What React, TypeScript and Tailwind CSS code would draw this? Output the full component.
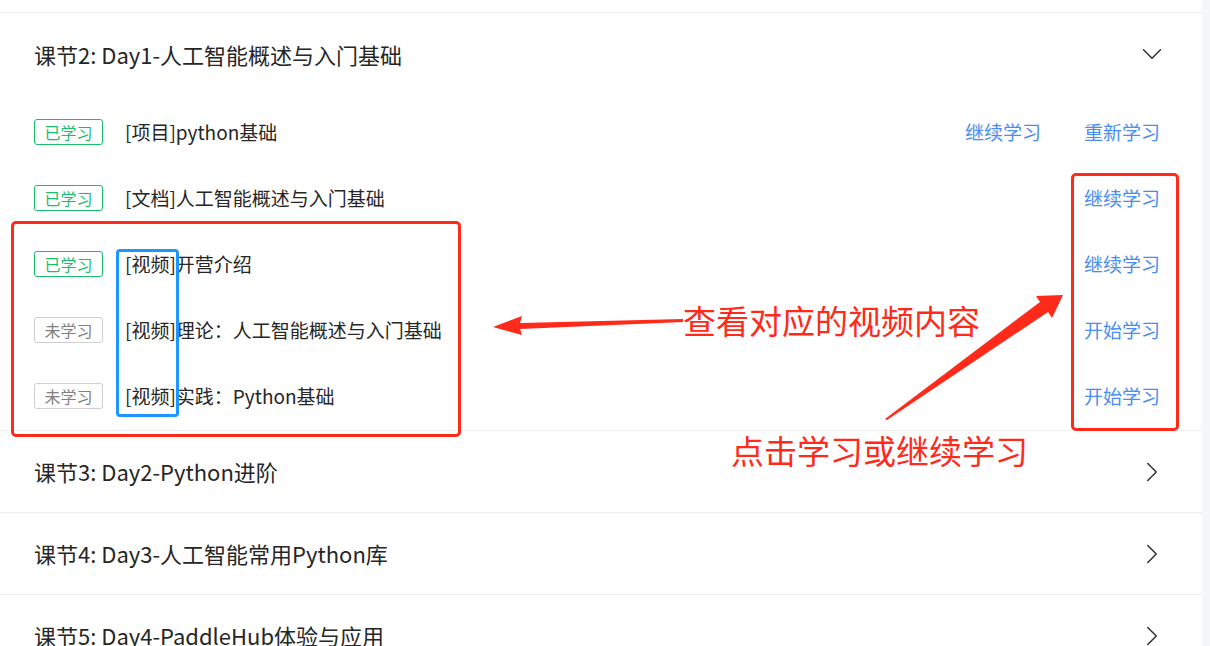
import React from 'react';
import { ChevronDown, ChevronRight } from 'lucide-react';

const font = { fontFamily: '"Noto Sans CJK SC", "Noto Sans", sans-serif' };

type Lesson = {
  done: boolean;
  title: string;
  actions: string[];
};

const lessons: Lesson[] = [
  { done: true, title: '[项目]python基础', actions: ['继续学习', '重新学习'] },
  { done: true, title: '[文档]人工智能概述与入门基础', actions: ['继续学习'] },
  { done: true, title: '[视频]开营介绍', actions: ['继续学习'] },
  { done: false, title: '[视频]理论：人工智能概述与入门基础', actions: ['开始学习'] },
  { done: false, title: '[视频]实践：Python基础', actions: ['开始学习'] },
];

const collapsed = [
  '课节3: Day2-Python进阶',
  '课节4: Day3-人工智能常用Python库',
  '课节5: Day4-PaddleHub体验与应用',
];

const Badge = ({ done }: { done: boolean }) =>
  done ? (
    <span className="w-[69px] h-[26px] shrink-0 flex items-center justify-center rounded-[3px] border border-[#19be6b] text-[16px] text-[#19be6b]">
      已学习
    </span>
  ) : (
    <span className="w-[69px] h-[26px] shrink-0 flex items-center justify-center rounded-[3px] border border-[#cfcfcf] text-[16px] text-[#808080]">
      未学习
    </span>
  );

export default function App() {
  return (
    <div className="relative w-full h-[646px] overflow-hidden bg-[#f5f6f7] flex" style={font}>
      <div className="w-[1202px] shrink-0 bg-white pt-3">
        {/* Expanded section */}
        <div className="border-t border-[#ececec]">
          <div className="h-[82px] flex items-center justify-between pl-[34px] pr-[33px]">
            <span className="text-[22px] text-[#262626]">课节2: Day1-人工智能概述与入门基础</span>
            <ChevronDown size={34} strokeWidth={1.1} className="text-[#333]" />
          </div>
          <div className="pt-1 pb-[1px]">
            {lessons.map((l, i) => (
              <div key={i} className="h-[66px] flex items-center pl-[34px] pr-[42px]">
                <Badge done={l.done} />
                <span className="ml-[22px] text-[19px] text-[#262626] flex-1">{l.title}</span>
                <div className="flex gap-[43px]">
                  {l.actions.map(a => (
                    <span key={a} className="text-[19px] text-[#4a8cf0]">{a}</span>
                  ))}
                </div>
              </div>
            ))}
          </div>
        </div>

        {/* Collapsed sections */}
        {collapsed.map(t => (
          <div key={t} className="border-t border-[#ececec] h-[82px] flex items-center justify-between pl-[34px] pr-[33px]">
            <span className="text-[22px] text-[#262626]">{t}</span>
            <ChevronRight size={34} strokeWidth={1.1} className="text-[#333]" />
          </div>
        ))}
      </div>

      {/* Annotation boxes */}
      <div className="absolute left-[11px] top-[221px] w-[450px] h-[216px] border-[3px] border-[#ff2a1a] rounded-[5px]" />
      <div className="absolute left-[116px] top-[249px] w-[63px] h-[168px] border-[3px] border-[#1e96ff] rounded-[4px]" />
      <div className="absolute left-[1071px] top-[173px] w-[108px] h-[258px] border-[3px] border-[#ff2a1a] rounded-[5px]" />

      {/* Annotation arrows */}
      <svg className="absolute left-0 top-0" width="1210" height="646" viewBox="0 0 1210 646">
        <polygon points="683,319 520,323 522,316 493,327 522,335 520,329 683,322" fill="#ff2a1a" />
        <polygon points="885,419 1040,302 1036,296 1063,295 1052,318 1048,312 887,420" fill="#ff2a1a" />
      </svg>

      <div className="absolute left-[683px] top-[298px] text-[33px] leading-[44px] text-[#ff2a1a]">查看对应的视频内容</div>
      <div className="absolute left-[731px] top-[428px] text-[33px] leading-[44px] text-[#ff2a1a]">点击学习或继续学习</div>
    </div>
  );
}
